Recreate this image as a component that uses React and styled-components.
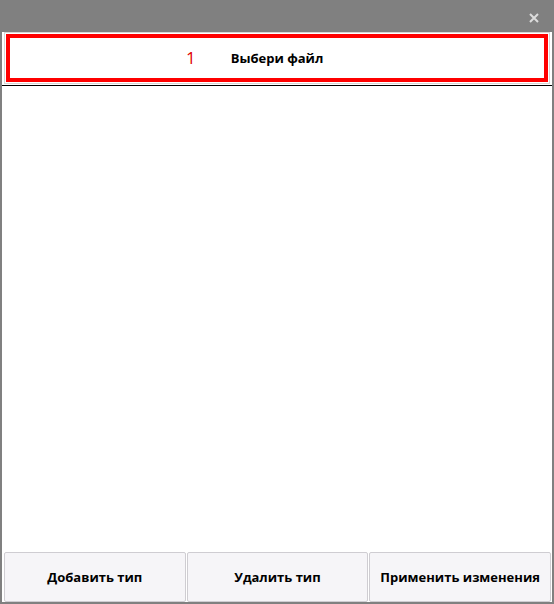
import React from "react";
import styled, { createGlobalStyle } from "styled-components";

const Global = createGlobalStyle`
  html, body { margin: 0; padding: 0; background: #ffffff; }
  body { font-family: "Open Sans", "Noto Sans", sans-serif; }
`;

const Window = styled.div`
  width: 554px;
  height: 604px;
  box-sizing: border-box;
  display: flex;
  flex-direction: column;
  background: #808080;
`;

const TitleBar = styled.div`
  height: 32px;
  flex: none;
  display: flex;
  align-items: center;
  justify-content: flex-end;
  padding-right: 14px;
  box-sizing: border-box;
`;

const Close = styled.button`
  border: none;
  background: none;
  padding: 0;
  width: 12px;
  height: 12px;
  margin-top: 4px;
  display: flex;
  align-items: center;
  justify-content: center;
  cursor: pointer;
`;

const Body = styled.div`
  flex: 1;
  margin: 0 2px 2px 2px;
  background: #ffffff;
  display: flex;
  flex-direction: column;
  min-height: 0;
`;

const SelectWrap = styled.div`
  margin: 0 2px 0 2px;
  border: 1px solid #d6d6d6;
  padding: 1px;
  flex: none;
`;

const Select = styled.div`
  height: 40px;
  border: 4px solid #ff0000;
  background: #ffffff;
  display: grid;
  grid-template-columns: 1fr auto 1fr;
  align-items: center;
`;

const Number = styled.span`
  justify-self: end;
  margin-right: 35px;
  color: #e00000;
  font-size: 17px;
  font-family: "Open Sans", sans-serif;
  margin-bottom: 2px;
`;

const SelectLabel = styled.span`
  font-weight: 700;
  font-size: 13px;
  color: #000;
`;

const Divider = styled.div`
  height: 1px;
  margin-top: 1px;
  background: #000;
  flex: none;
`;

const List = styled.div`
  flex: 1;
  background: #ffffff;
`;

const Buttons = styled.div`
  display: grid;
  grid-template-columns: repeat(3, 1fr);
  gap: 1px;
  padding: 0 1px 0 2px;
  height: 50px;
  flex: none;
`;

const Button = styled.button`
  border: 1px solid #cfcdd2;
  border-radius: 2px;
  background: #f6f5f8;
  font-family: "Open Sans", "Noto Sans", sans-serif;
  font-weight: 700;
  font-size: 13px;
  color: #000;
  padding: 0;
  margin: 0;
  cursor: pointer;
`;

export default function App() {
  return (
    <>
      <Global />
      <Window>
        <TitleBar>
          <Close aria-label="Закрыть">
            <svg width="10" height="10" viewBox="0 0 10 10">
              <path d="M1 1 L9 9 M9 1 L1 9" stroke="#dcdcdc" strokeWidth="2" />
            </svg>
          </Close>
        </TitleBar>
        <Body>
          <SelectWrap>
            <Select>
              <Number>1</Number>
              <SelectLabel>Выбери файл</SelectLabel>
              <span />
            </Select>
          </SelectWrap>
          <Divider />
          <List />
          <Buttons>
            <Button>Добавить тип</Button>
            <Button>Удалить тип</Button>
            <Button>Применить изменения</Button>
          </Buttons>
        </Body>
      </Window>
    </>
  );
}
